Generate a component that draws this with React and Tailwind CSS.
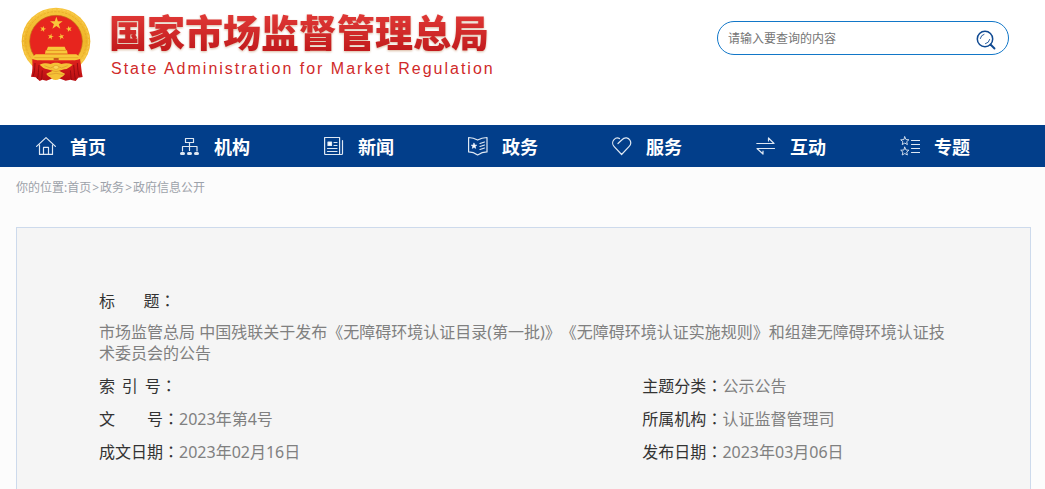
import React from "react";

const STAR = "0,-10 2.3,-3.1 9.5,-3.1 3.7,1.2 5.9,8.1 0,3.9 -5.9,8.1 -3.7,1.2 -9.5,-3.1 -2.3,-3.1";

function Emblem() {
  return (
    <svg viewBox="32 22 210 225" className="h-[75px] w-[70px] shrink-0" aria-hidden="true">
      <defs>
        <linearGradient id="gold" x1="0" y1="0" x2="0" y2="1">
          <stop offset="0" stopColor="#f7c53c" />
          <stop offset="0.5" stopColor="#efb52a" />
          <stop offset="1" stopColor="#fbd04a" />
        </linearGradient>
        <linearGradient id="drape" x1="0" y1="0" x2="0" y2="1">
          <stop offset="0" stopColor="#e0231d" />
          <stop offset="1" stopColor="#b80d12" />
        </linearGradient>
      </defs>
      <ellipse cx="137" cy="125" rx="103" ry="101" fill="url(#gold)" />
      <ellipse cx="137" cy="125" rx="91" ry="89" fill="none" stroke="#e3a424" strokeWidth="2" strokeDasharray="7 4" />
      <ellipse cx="137" cy="125" rx="98" ry="96" fill="none" stroke="#fbd763" strokeWidth="2" strokeDasharray="9 5" />
      <ellipse cx="137" cy="125" rx="79" ry="78" fill="#e7251e" stroke="#bf6f14" strokeWidth="2" />
      <g fill="#f8c83a">
        <polygon points={STAR} transform="translate(138 71) scale(2)" />
        <polygon points={STAR} transform="translate(98 88) rotate(15) scale(.95)" />
        <polygon points={STAR} transform="translate(176 88) rotate(-15) scale(.95)" />
        <polygon points={STAR} transform="translate(121 111) rotate(15) scale(.95)" />
        <polygon points={STAR} transform="translate(153 111) rotate(-15) scale(.95)" />
        <path d="M113 141h50l4 10h-58z" />
        <path d="M106 152h64l2 10h-68z" />
        <path d="M76 164h122l8 6v12H69v-12z" />
      </g>
      <path d="M108 152h60M106 162h64M72 174h132" stroke="#d8931c" strokeWidth="1.5" />
      <path d="M130 182v-7h15v7z" fill="#c9571a" />
      <path
        d="M66 178c20 6 40 8 71 8s52-2 72-8c4 20 4 38 8 54l-13 2-8 10-16-4-14 3-16-6h-26l-16 6-12-3-8 4-12-11-14-2c6-16 4-34 4-53z"
        fill="url(#drape)"
      />
      <path d="M74 190c-1 18-1 30-6 40M86 196c-2 15-1 30-5 42M96 212c-2 12 0 20-3 28M201 190c1 18 2 30 6 40M190 196c2 15 2 30 5 42M180 212c2 12 1 20 3 28" fill="none" stroke="#8f090d" strokeWidth="2.5" />
      <path
        d="M88 195c12-5 22-5 33-2 9-5 23-5 32 0 11-3 22-3 34 2-9 7-15 13-25 14l-16 4 18 9c-4 9-12 9-16 15-7 5-17 5-24 0-4-6-12-6-16-15l19-9-16-4c-10-1-16-8-23-14z"
        fill="#f5c136"
      />
      <path d="M102 198l18 7 17-7 17 7 18-7M114 225l23-4 23 4M124 211c8 6 18 6 26 0" fill="none" stroke="#d9962a" strokeWidth="2" />
      <ellipse cx="137" cy="203" rx="8" ry="6" fill="#fbd755" stroke="#d9962a" strokeWidth="1.5" />
    </svg>
  );
}

function NavIcon({ children }) {
  return (
    <svg
      viewBox="0 0 20 20"
      className="h-5 w-5 shrink-0"
      fill="none"
      stroke="#dfe8f3"
      strokeWidth="1.2"
      strokeLinecap="round"
      strokeLinejoin="round"
      aria-hidden="true"
    >
      {children}
    </svg>
  );
}

const SMALL_STAR = "0,-4.2 1.2,-1.4 4.1,-1.2 1.9,.7 2.6,3.6 0,2.1 -2.6,3.6 -1.9,.7 -4.1,-1.2 -1.2,-1.4";

const NAV = [
  {
    label: "首页",
    icon: (
      <path d="M.6 10.4 10 1.6l9.4 8.8M3.5 9v9.4h13V9M7.5 18.4v-7h5v7" />
    ),
  },
  {
    label: "机构",
    icon: (
      <>
        <path d="M5.5 2.5h8v4h-8zM9.5 6.5v8M2.5 15v-4.500h14.500V15" />
        <path d="M1.5 17.5h2M8.5 17.5h2M15.5 17.5h2" strokeWidth="3" />
      </>
    ),
  },
  {
    label: "新闻",
    icon: (
      <>
        <path d="M.6 1.5h15v17H1.6q-1 0-1-1zM18.5 4.5v13q0 1-1 1h-2M10 6.5h3M10 9.5h3M3.5 12.5h9.5M3.5 15.5h9.5" />
        <path d="M4 6h3.5v3.5H4z" fill="#fff" />
      </>
    ),
  },
  {
    label: "政务",
    icon: (
      <>
        <path d="M.6 1.5q5 0 9 2.6 4-2.6 9.4-2.6v14.400q-5 0-9.400 3-4-3-9-3zM12 7.5l4.500-1.500M12 10.500l4.500-1.500M12 13.500l4.500-1.500" />
        <polygon points={SMALL_STAR} transform="translate(6 10) scale(.65)" fill="#fff" />
      </>
    ),
  },
  {
    label: "服务",
    icon: (
      <path d="M6 7.5 9.7 4C13 .6 16.5 1.8 18 4.3c1.3 2.3.8 4.6-1 6.4L9.6 18.5 2.2 10.7C.2 8.5.2 5.5 2 3.6 3.6 1.9 6 1.7 7.5 2.6" />
    ),
  },
  {
    label: "互动",
    icon: (
      <path d="M.8 7.5H18L12.500 2v3M18.500 12.500H1L7 18v-3" />
    ),
  },
  {
    label: "专题",
    icon: (
      <>
        <polygon points={SMALL_STAR} transform="translate(4.8 5)" strokeWidth=".9" />
        <polygon points={SMALL_STAR} transform="translate(4.8 15.4)" strokeWidth=".9" />
        <path d="M11.5 4.500h8M11.5 8.500h8M11.5 12.500h8M11.5 16.500h8" />
      </>
    ),
  },
];

const FIELDS = [
  ["索\u00a0\u2009引\u00a0\u2009号", ""],
  ["主题分类", "公示公告"],
  ["文\u2003\u2003号", "2023年第4号"],
  ["所属机构", "认证监督管理司"],
  ["成文日期", "2023年02月16日"],
  ["发布日期", "2023年03月06日"],
];

function Term({ children }) {
  return (
    <dt className="shrink-0 whitespace-nowrap text-[#333]">
      {children}
      <span className="font-['Noto_Sans_CJK_TC',sans-serif] leading-none">：</span>
    </dt>
  );
}

export default function App() {
  return (
    <div className="min-h-screen bg-[#fcfcfc] font-['Noto_Sans','Noto_Sans_CJK_SC',sans-serif] [text-spacing-trim:space-all]">
      <header className="flex items-start justify-between bg-white pt-[7px] pr-9 pb-[43px] pl-[21px]">
        <a href="#" className="flex gap-[18px]">
          <Emblem />
          <div className="pt-1">
            <h1 className="bg-linear-to-b from-[#e23a38] to-[#c21a1c] bg-clip-text font-['Noto_Sans_CJK_SC',sans-serif] text-[38px] leading-10 font-black text-transparent drop-shadow-[0_1px_1px_#d8b9a0]">
              国家市场监督管理总局
            </h1>
            <p className="mt-1.5 pl-0.5 font-['Liberation_Sans',sans-serif] text-base leading-6 tracking-[2px] text-[#d02a2a]">
              State Administration for Market Regulation
            </p>
          </div>
        </a>
        <form
          className="mt-3.5 flex h-[34px] w-[292px] items-center rounded-full border border-[#1277c8] pr-3 pl-2.5"
          onSubmit={(e) => e.preventDefault()}
        >
          <input
            type="text"
            aria-label="请输入要查询的内容"
            placeholder="请输入要查询的内容"
            className="min-w-0 flex-1 bg-transparent pt-0.5 text-xs outline-none placeholder:text-[#757575]"
          />
          <button type="submit" aria-label="搜索" className="mt-1">
            <svg viewBox="0 0 20 20" className="h-5 w-5" fill="none" stroke="#104a92" strokeLinecap="round">
              <circle cx="9" cy="9" r="7.7" strokeWidth="1.5" />
              <path d="m14.5 14.5 4 4" strokeWidth="1.9" />
              <path d="M4.3 8.5Q5 5 8 4.3M13.7 9.5Q13 13 9.5 13.7" strokeWidth=".9" />
            </svg>
          </button>
        </form>
      </header>

      <nav className="bg-[#023e8a] pr-[21px] pl-4">
        <ul className="grid grid-cols-7">
          {NAV.map(({ label, icon }) => (
            <li key={label}>
              <a href="#" className="flex h-[42px] items-center gap-3.5 pl-5 text-lg font-bold text-white">
                <NavIcon>{icon}</NavIcon>
                <span className="pt-0.5">{label}</span>
              </a>
            </li>
          ))}
        </ul>
      </nav>

      <main className="pr-3.5 pl-4">
        <p className="h-[60px] pt-[11px] text-xs leading-5 text-[#9ca2aa]">
          你的位置:<a href="#">首页</a>
          <span className="mx-px">&gt;</span>
          <a href="#">政务</a>
          <span className="mx-px">&gt;</span>
          <a href="#">政府信息公开</a>
        </p>
        <section className="border border-[#cddaec] bg-[#f5f5f5] px-[82px] pt-[61px] pb-8">
          <dl className="grid grid-cols-[64%_36%]">
            <div className="col-span-2 pb-1.5">
              <div className="leading-6">
                <Term>{"标\u2003\u00a0\u00a0\u00a0题"}</Term>
              </div>
              <dd className="pt-[9px] leading-[21px] text-[#808080]">
                市场监管总局 中国残联关于发布《无障碍环境认证目录(第一批)》《无障碍环境认证实施规则》和组建无障碍环境认证技术委员会的公告
              </dd>
            </div>
            {FIELDS.map(([term, value]) => (
              <div key={term} className="flex leading-[33px]">
                <Term>{term}</Term>
                <dd className="text-[#808080]">{value}</dd>
              </div>
            ))}
          </dl>
        </section>
      </main>
    </div>
  );
}
